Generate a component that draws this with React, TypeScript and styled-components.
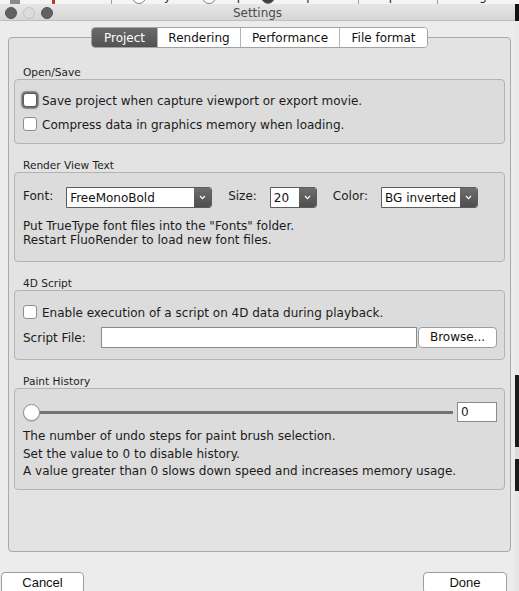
import React from 'react';
import styled, { createGlobalStyle } from 'styled-components';

const UI = '"DejaVu Sans", Verdana, sans-serif';

const Global = createGlobalStyle`
  html, body { margin: 0; padding: 0; background: #ececec; }
  body {
    width: 519px; height: 591px; overflow: hidden;
    font-family: ${UI};
    font-size: 12px; color: #1b1b1b;
  }
  * { box-sizing: border-box; }
`;

const Screen = styled.div`
  display: flex; flex-direction: column;
  width: 519px; height: 591px; overflow: hidden;
`;

/* window peeking behind the dialog */
const BackStrip = styled.div`
  height: 4px; flex-shrink: 0; overflow: hidden;
  display: flex; background: #f4f4f4;
`;
const BackCell = styled.div<{ $w: number; $line?: boolean; $pad?: number }>`
  width: ${p => p.$w}px; flex-shrink: 0; height: 4px; overflow: hidden;
  border-left: ${p => (p.$line ? '1px solid #a0a0a0' : 'none')};
  padding-left: ${p => p.$pad ?? 0}px;
`;
const BackText = styled.div`
  margin-top: -11px; height: 15px;
  display: flex; align-items: center; gap: 4px;
  font-size: 12px; line-height: 15px; white-space: nowrap; color: #222;
`;
const BackRadio = styled.span<{ $on?: boolean }>`
  width: 14px; height: 14px; border-radius: 50%; flex-shrink: 0;
  border: 1px solid #7d7d7d; background: ${p => (p.$on ? '#3d3d3d' : '#fff')};
`;
const BackBar = styled.span<{ $c: string; $w: number }>`
  width: ${p => p.$w}px; height: 15px; background: ${p => p.$c}; flex-shrink: 0;
`;
const BackGap = styled.span`
  width: 24px; flex-shrink: 0;
`;

const Main = styled.div`
  flex: 1; display: flex; min-height: 0;
`;

const Dialog = styled.div`
  width: 515px; flex-shrink: 0; display: flex; flex-direction: column;
  background: #ececec; overflow: hidden;
`;

const Edge = styled.div`
  width: 4px; flex-shrink: 0; display: flex; flex-direction: column;
`;
const EdgeSeg = styled.div<{ $h: number; $c: string }>`
  height: ${p => p.$h}px; background: ${p => p.$c}; flex-shrink: 0;
`;

const TitleBar = styled.div`
  height: 17px; flex-shrink: 0;
  display: grid; grid-template-columns: 1fr auto 1fr; align-items: center;
  background: linear-gradient(#e6e6e6, #d6d6d6);
  border-bottom: 1px solid #bdbdbd;
  padding-top: 1px;
`;
const Lights = styled.div`
  display: flex; gap: 6px; padding-left: 5px; align-items: center;
`;
const Light = styled.span<{ $off?: boolean }>`
  width: 12px; height: 12px; border-radius: 50%;
  background: ${p => (p.$off ? '#dcdcdc' : '#616161')};
  border: 1px solid ${p => (p.$off ? '#c3c3c3' : '#545454')};
`;
const Title = styled.div`
  font-size: 12px; color: #4b4b4b; line-height: 16px;
`;

const Body = styled.div`
  flex: 1; display: flex; flex-direction: column;
  padding: 6px 4px 0 8px;
`;

const TabsRow = styled.div`
  display: flex; justify-content: center;
  margin-bottom: -11px; position: relative; z-index: 1;
`;
const Segmented = styled.div`
  display: flex; height: 21px; border: 1px solid #a2a2a2; border-radius: 4px;
  overflow: hidden; background: #fff;
`;
const Tab = styled.div<{ $active?: boolean; $w: number }>`
  width: ${p => p.$w}px; text-align: center; line-height: 19px; font-size: 12px;
  padding-top: 1px;
  color: ${p => (p.$active ? '#fff' : '#111')};
  background: ${p => (p.$active ? 'linear-gradient(#6b6b6b, #525252)' : '#fff')};
  & + & { border-left: 1px solid #b4b4b4; }
`;

const Panel = styled.div`
  border: 1px solid #a9a9a9; border-radius: 4px; background: #e3e3e3;
  padding: 27px 5px 61px;
  display: flex; flex-direction: column; gap: 14px;
`;

const Group = styled.div`
  display: flex; flex-direction: column;
`;
const GroupLabel = styled.div`
  font-size: 10.6px; line-height: 14px; height: 14px; padding-left: 9px; color: #1e1e1e;
`;
const GroupBox = styled.div<{ $pad: string; $gap?: number }>`
  border: 1px solid #b3b3b3; border-radius: 4px; background: #dcdcdc;
  padding: ${p => p.$pad};
  display: flex; flex-direction: column; gap: ${p => p.$gap ?? 0}px;
`;

const CheckRow = styled.label`
  display: flex; align-items: center; gap: 5px; height: 20px; font-size: 12px;
  padding-top: 1px;
`;
const Check = styled.span<{ $focus?: boolean }>`
  width: 14px; height: 14px; border-radius: 3px; background: #fff; flex-shrink: 0;
  margin-top: -1px;
  border: 1px solid ${p => (p.$focus ? '#5a5a5a' : '#8e8e8e')};
  box-shadow: ${p => (p.$focus ? '0 0 0 1.5px #6f6f6f, 0 0 2px 2px rgba(80,80,80,.35)' : 'none')};
`;

const FieldRow = styled.div`
  display: flex; align-items: center; gap: 16px; height: 20px;
`;
const Field = styled.div`
  display: flex; align-items: center; gap: 13px;
`;
const FieldLabel = styled.span`
  font-size: 12px; line-height: 16px; margin-top: -2px;
`;
const Select = styled.div<{ $w: number }>`
  width: ${p => p.$w}px; height: 21px; display: flex;
  border: 1px solid #5c5c5c; border-radius: 0 3px 3px 0; background: #fff;
`;
const SelectValue = styled.span`
  flex: 1; padding-left: 3px; font-size: 12px; line-height: 20px; color: #111;
  white-space: nowrap; overflow: hidden;
`;
const SelectButton = styled.span`
  width: 17px; flex-shrink: 0; display: flex; align-items: center; justify-content: center;
  background: linear-gradient(#6d6d6d, #4e4e4e); border-radius: 0 2px 2px 0;
`;

const Notes = styled.div<{ $lh: number; $mt: number }>`
  margin-top: ${p => p.$mt}px; line-height: ${p => p.$lh}px; font-size: 12px;
`;

const ScriptRow = styled.div`
  display: flex; align-items: center; height: 21px;
`;
const ScriptLabel = styled.span`
  width: 78px; flex-shrink: 0; font-size: 12px;
`;
const TextBox = styled.div<{ $w?: number }>`
  ${p => (p.$w ? `width: ${p.$w}px;` : 'flex: 1;')}
  height: 100%; background: #fff; border: 1px solid #8a8a8a;
  padding-left: 3px; font-size: 12px; line-height: 18px;
`;
const PushButton = styled.div<{ $w: number }>`
  width: ${p => p.$w}px; height: 21px; margin-left: 1px; flex-shrink: 0;
  background: #fff; border: 1px solid #9d9d9d; border-radius: 4px;
  text-align: center; font-size: 12px; line-height: 19px; color: #111;
`;

const SliderRow = styled.div`
  display: flex; align-items: center; height: 20px; gap: 4px;
`;
const SliderTrack = styled.div`
  flex: 1; display: flex; align-items: center;
`;
const Thumb = styled.span`
  width: 17px; height: 17px; border-radius: 50%; flex-shrink: 0;
  background: #fff; border: 1px solid #8c8c8c; box-shadow: 0 1px 1px rgba(0,0,0,.15);
`;
const Line = styled.span`
  flex: 1; height: 3px; background: #747474;
`;

const Footer = styled.div`
  display: flex; justify-content: space-between;
  margin-top: 20px; margin-left: -7px; padding-right: 4px;
`;
const FooterButton = styled.div<{ $w: number }>`
  width: ${p => p.$w}px; height: 22px; background: #fff;
  border: 1px solid #9e9e9e; border-radius: 4px;
  text-align: center; font-family: "Liberation Sans", Arial, sans-serif;
  font-size: 13px; line-height: 20px; color: #111;
`;

const Chevron = () => (
  <svg width="7" height="5" viewBox="0 0 7 5">
    <polyline points="1,1 3.5,3.6 6,1" fill="none" stroke="#fff" strokeWidth="1.2" />
  </svg>
);

const Dropdown = ({ w, value }: { w: number; value: string }) => (
  <Select $w={w}>
    <SelectValue>{value}</SelectValue>
    <SelectButton><Chevron /></SelectButton>
  </Select>
);

export default function App() {
  return (
    <>
      <Global />
      <Screen>
        <BackStrip>
          <BackCell $w={111} $pad={10}>
            <BackText><BackBar $c="#8a8a8a" $w={10} /><BackGap /><BackBar $c="#c0392b" $w={3} /></BackText>
          </BackCell>
          <BackCell $w={247} $line $pad={20}>
            <BackText>
              <BackRadio />Layered<BackRadio />Depth<BackRadio $on />Composite
            </BackText>
          </BackCell>
          <BackCell $w={79} $line $pad={14}>
            <BackText>Capture</BackText>
          </BackCell>
          <BackCell $w={82} $line $pad={12}>
            <BackText>Background</BackText>
          </BackCell>
        </BackStrip>
        <Main>
          <Dialog>
            <TitleBar>
              <Lights>
                <Light />
                <Light $off />
                <Light />
              </Lights>
              <Title>Settings</Title>
              <span />
            </TitleBar>
            <Body>
              <TabsRow>
                <Segmented>
                  <Tab $active $w={65}>Project</Tab>
                  <Tab $w={83}>Rendering</Tab>
                  <Tab $w={99}>Performance</Tab>
                  <Tab $w={88}>File format</Tab>
                </Segmented>
              </TabsRow>
              <Panel>
                <Group>
                  <GroupLabel>Open/Save</GroupLabel>
                  <GroupBox $pad="10px 8px 9px" $gap={4}>
                    <CheckRow><Check $focus />Save project when capture viewport or export movie.</CheckRow>
                    <CheckRow><Check />Compress data in graphics memory when loading.</CheckRow>
                  </GroupBox>
                </Group>
                <Group>
                  <GroupLabel>Render View Text</GroupLabel>
                  <GroupBox $pad="14px 8px 14px">
                    <FieldRow>
                      <Field>
                        <FieldLabel>Font:</FieldLabel>
                        <Dropdown w={146} value="FreeMonoBold" />
                      </Field>
                      <Field>
                        <FieldLabel>Size:</FieldLabel>
                        <Dropdown w={47} value="20" />
                      </Field>
                      <Field>
                        <FieldLabel>Color:</FieldLabel>
                        <Dropdown w={97} value="BG inverted" />
                      </Field>
                    </FieldRow>
                    <Notes $lh={14} $mt={12}>
                      Put TrueType font files into the "Fonts" folder.<br />
                      Restart FluoRender to load new font files.
                    </Notes>
                  </GroupBox>
                </Group>
                <Group>
                  <GroupLabel>4D Script</GroupLabel>
                  <GroupBox $pad="11px 7px 11px 8px" $gap={5}>
                    <CheckRow><Check />Enable execution of a script on 4D data during playback.</CheckRow>
                    <ScriptRow>
                      <ScriptLabel>Script File:</ScriptLabel>
                      <TextBox />
                      <PushButton $w={79}>Browse...</PushButton>
                    </ScriptRow>
                  </GroupBox>
                </Group>
                <Group>
                  <GroupLabel>Paint History</GroupLabel>
                  <GroupBox $pad="13px 7px 8px 8px">
                    <SliderRow>
                      <SliderTrack>
                        <Thumb />
                        <Line />
                      </SliderTrack>
                      <TextBox $w={40}>0</TextBox>
                    </SliderRow>
                    <Notes $lh={17.5} $mt={6}>
                      The number of undo steps for paint brush selection.<br />
                      Set the value to 0 to disable history.<br />
                      A value greater than 0 slows down speed and increases memory usage.
                    </Notes>
                  </GroupBox>
                </Group>
              </Panel>
              <Footer>
                <FooterButton $w={83}>Cancel</FooterButton>
                <FooterButton $w={84}>Done</FooterButton>
              </Footer>
            </Body>
          </Dialog>
          <Edge>
            <EdgeSeg $h={17} $c="#111" />
            <EdgeSeg $h={354} $c="#e9e9e9" />
            <EdgeSeg $h={72} $c="#1b1b1b" />
            <EdgeSeg $h={12} $c="#dcdcdc" />
            <EdgeSeg $h={32} $c="#1b1b1b" />
            <EdgeSeg $h={100} $c="#e6e6e6" />
          </Edge>
        </Main>
      </Screen>
    </>
  );
}
